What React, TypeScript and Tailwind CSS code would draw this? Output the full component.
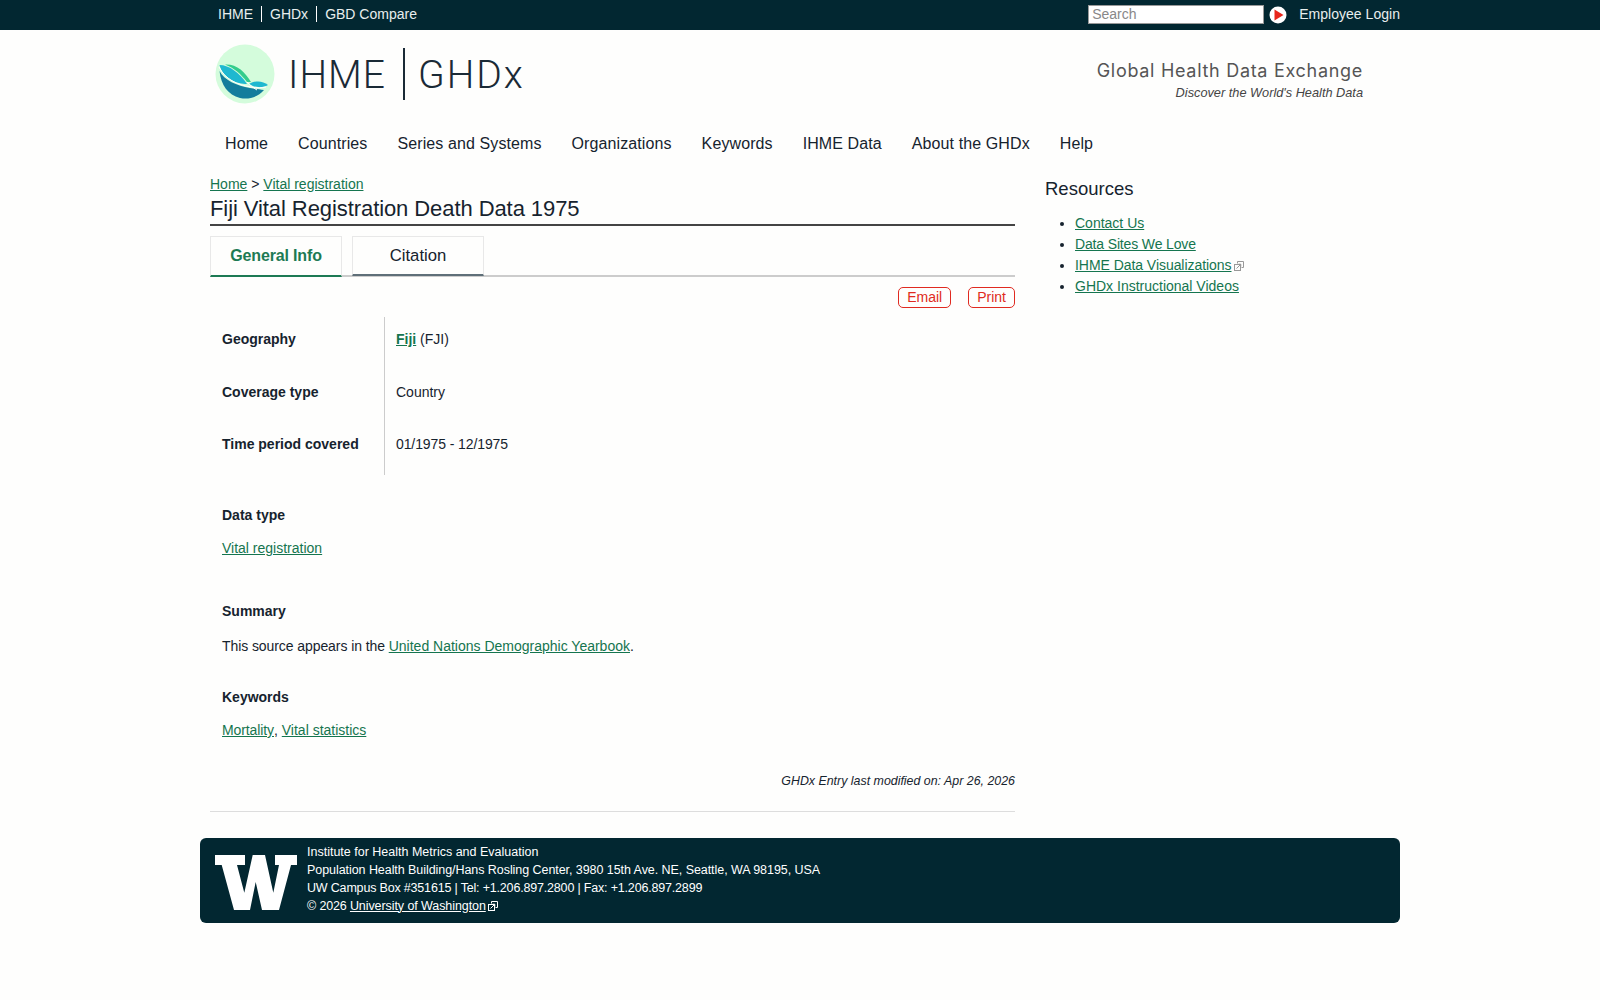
const LinkOut = ({ className }: { className: string }) => (
  <svg viewBox="0 0 10 10" className={className} fill="none" stroke="currentColor" strokeWidth="1">
    <path d="M3.5 2.5V0.5H9.5V6.5H7.5" />
    <rect x="0.5" y="3.5" width="6" height="6" />
    <path d="M2.5 7.5L6.5 3.5M4.5 3.2H6.8V5.5" />
  </svg>
);

const Logo = () => (
  <svg viewBox="0 0 60 60" className="w-[60px] h-[60px] shrink-0">
    <circle cx="30" cy="30" r="29.5" fill="#d4fcdc" />
    <path d="M4.5 21C14 21 25 29 32 40C22 40 8 35 4.5 21Z" fill="#1fb8d0" />
    <path d="M10 20.5C22 20 30 28 36 38L32 38C26 30 19 24 10 20.5Z" fill="#33cc8c" />
    <path d="M4.5 27C9 36 22 42 35 44C40 45 45 45 49 46C43 53 34 56 25 54C13 51 6 41 4.5 27Z" fill="#137d9c" />
    <path d="M34 40C41 36 48 37 53 41C48 44 40 44 34 40Z" fill="#1fb8d0" />
    <path d="M4 23C10 35 22 41 36 43C42 44 47 44 51 43M32 38C36 42 40 45 42 46" fill="none" stroke="#fff" strokeWidth="1" />
  </svg>
);

const Dept = () => (
  <svg viewBox="0 0 82 55" className="w-[82px] h-[55px] shrink-0 mt-[4px]" fill="#fff">
    <path d="M0 0H30V10H22L29.3 37.7L37.7 0H50L58.3 37.7L64 10H60V0H82V10H76L64 55H47L40.7 27L35 55H19L6.7 10H0Z" />
  </svg>
);

export default function App() {
  const nav = ["Home", "Countries", "Series and Systems", "Organizations", "Keywords", "IHME Data", "About the GHDx", "Help"];
  const link = "text-[#15754f] underline";

  return (
    <div className="min-h-[1000px] bg-[#fefefd] text-[#16232e] font-['Liberation_Sans',Arial,sans-serif] text-[14px]">
      <div className="h-[30px] bg-[#022731] text-[#e8eeee]">
        <div className="w-[1200px] mx-auto flex items-center justify-between h-full pb-[1px]">
          <div className="flex items-center pl-[18px] mb-[1px]">
            <span className="pr-2 border-r border-white leading-[16px]">IHME</span>
            <span className="px-2 border-r border-white leading-[16px]">GHDx</span>
            <span className="pl-2 leading-[16px]">GBD Compare</span>
          </div>
          <div className="flex items-center">
            <input placeholder="Search" className="w-[176px] h-[19px] bg-white border border-[#999] px-[3px] text-[14px] placeholder:text-[#888] outline-none" />
            <svg viewBox="0 0 18 18" className="w-[18px] h-[18px] ml-[5px]">
              <circle cx="9" cy="9" r="8.5" fill="#fff" />
              <path d="M5.5 3.5L14.5 9L5.5 14.5Z" fill="#e8261c" />
            </svg>
            <span className="ml-[12px] tracking-[0.03px]">Employee Login</span>
          </div>
        </div>
      </div>

      <div className="w-[1200px] mx-auto">
        <div className="h-[90px] flex items-center justify-between pl-[15px] pr-[37px]">
          <div className="flex items-center mb-[2px] font-['Roboto',sans-serif] font-light text-[39px] text-[#1a2a36]">
            <Logo />
            <span className="ml-[13px] mt-[2px] tracking-[1px]">IHME</span>
            <span className="w-[2px] h-[52px] bg-[#1a2a36] ml-[17px] mr-[13px]"></span>
            <span className="mt-[2px] tracking-[2px]">GHDx</span>
          </div>
          <div className="text-right pt-[10px]">
            <div className="font-['Inter',sans-serif] text-[18px] tracking-[0.7px] leading-[24px] text-[#555]">Global Health Data Exchange</div>
            <div className="italic text-[12.75px] leading-[18px] mt-[1px] text-[#444]">Discover the World's Health Data</div>
          </div>
        </div>

        <nav className="h-[46px] flex items-center pl-[10px] pt-[2px] text-[16px] tracking-[0.1px]">
          {nav.map((item) => (
            <span key={item} className="px-[15px]">{item}</span>
          ))}
        </nav>

        <div className="flex pl-[10px] mt-[7px]">
          <main className="w-[805px]">
            <div className="leading-[20px] mt-[1px]">
              <a className={link}>Home</a> &gt; <a className={link}>Vital registration</a>
            </div>
            <h1 className="text-[22px] tracking-[-0.08px] leading-[28px] pt-[1px] pb-[1px] border-b-2 border-[#444]">Fiji Vital Registration Death Data 1975</h1>

            <div className="flex gap-[10px] mt-[10px] border-b-2 border-[#ccc] h-[41px]">
              <div className="w-[132px] h-[41px] border border-[#e8e8e8] border-b-2 border-b-[#1d7a54] flex items-center justify-center font-bold text-[16px] tracking-[-0.15px] text-[#1d7a54]">General Info</div>
              <div className="w-[132px] h-[40px] border border-[#e8e8e8] border-b-2 border-b-[#5f6f78] flex items-center justify-center text-[16.7px]">Citation</div>
            </div>

            <div className="flex justify-end gap-[17px] mt-[10px]">
              <span className="h-[21px] px-[8px] leading-[19px] border border-[#e02a20] rounded-[5px] text-[#e02a20]">Email</span>
              <span className="h-[21px] px-[8px] leading-[19px] border border-[#e02a20] rounded-[5px] text-[#e02a20]">Print</span>
            </div>

            <div className="grid grid-cols-[174px_1fr] mt-[9px] grid-rows-[53px_52px_53px] leading-[20px] w-fit">
              <div className="pl-3 pt-3 font-bold">Geography</div>
              <div className="pl-[11px] pt-3 w-[620px] border-l border-[#ccc]"><a className={`${link} font-bold`}>Fiji</a> (FJI)</div>
              <div className="pl-3 pt-3 font-bold">Coverage type</div>
              <div className="pl-[11px] pt-3 border-l border-[#ccc]">Country</div>
              <div className="pl-3 pt-3 font-bold">Time period covered</div>
              <div className="pl-[11px] pt-3 border-l border-[#ccc] tracking-[-0.1px]">01/1975 - 12/1975</div>
            </div>

            <div className="pl-3">
              <div className="font-bold mt-[30px] leading-[20px]">Data type</div>
              <div className="mt-[13px] leading-[20px]"><a className={link}>Vital registration</a></div>
              <div className="font-bold mt-[43px] leading-[20px]">Summary</div>
              <div className="mt-[15px] leading-[20px]"><span className="tracking-[-0.08px]">This source appears in the </span><a className={link}>United Nations Demographic Yearbook</a>.</div>
              <div className="font-bold mt-[31px] leading-[20px]">Keywords</div>
              <div className="mt-[13px] leading-[20px]"><a className={`${link} tracking-[-0.1px]`}>Mortality</a>, <a className={link}>Vital statistics</a></div>
            </div>

            <div className="text-right italic text-[12.4px] leading-[18px] mt-[32px]">GHDx Entry last modified on: Apr 26, 2026</div>
            <div className="border-t border-[#ddd] mt-[21px]"></div>
          </main>

          <aside className="ml-[30px] mt-[4px]">
            <h2 className="text-[18.5px] leading-[24px]">Resources</h2>
            <ul className="list-disc pl-[30px] mt-[12px] leading-[21px] marker:text-[#16232e]">
              <li><a className={link}>Contact Us</a></li>
              <li><a className={`${link} tracking-[-0.15px]`}>Data Sites We Love</a></li>
              <li><a className={`${link} tracking-[-0.05px]`}>IHME Data Visualizations</a><LinkOut className="inline-block w-[10px] h-[10px] ml-[2px] text-[#999]" /></li>
              <li><a className={link}>GHDx Instructional Videos</a></li>
            </ul>
          </aside>
        </div>

        <footer className="mt-[26px] h-[85px] bg-[#022731] rounded-[6px] text-white flex items-center pl-[15px]">
          <Dept />
          <div className="ml-[10px] mb-[4px] text-[12.5px] leading-[18px]">
            <div>Institute for Health Metrics and Evaluation</div>
            <div className="tracking-[-0.06px]">Population Health Building/Hans Rosling Center, 3980 15th Ave. NE, Seattle, WA 98195, USA</div>
            <div className="tracking-[-0.18px]">UW Campus Box #351615 | Tel: +1.206.897.2800 | Fax: +1.206.897.2899</div>
            <div><span className="tracking-[-0.15px]">© 2026 </span><a className="underline tracking-[-0.08px]">University of Washington</a><LinkOut className="inline-block w-[10px] h-[10px] ml-[2px] text-white" /></div>
          </div>
        </footer>
      </div>
    </div>
  );
}
